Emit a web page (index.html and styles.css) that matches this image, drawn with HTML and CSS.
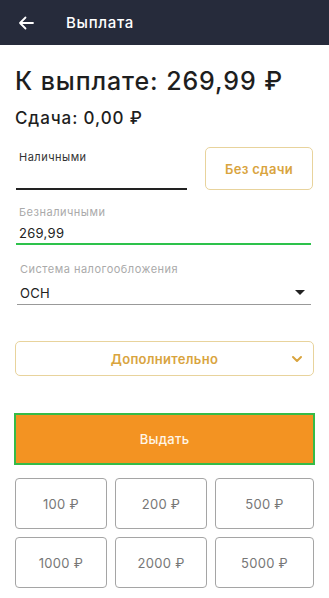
FILE: index.html
```
<!DOCTYPE html>
<html lang="ru">
<head>
<meta charset="utf-8">
<link rel="stylesheet" href="styles.css">
</head>
<body>
<header class="topbar">
  <svg class="back" width="16" height="14" viewBox="0 0 16 14"><path d="M15 7H2M7.5 1.5L2 7l5.5 5.5" fill="none" stroke="#fff" stroke-width="1.8" stroke-linecap="round" stroke-linejoin="round"/></svg>
  <span class="topbar-title">Выплата</span>
</header>
<main class="content">
  <h1 class="total">К выплате: 269,99 ₽</h1>
  <div class="change">Сдача: 0,00 ₽</div>

  <div class="cash-row">
    <div class="field cash">
      <div class="label dark">Наличными</div>
      <div class="value"></div>
    </div>
    <button class="btn-outline nochange">Без сдачи</button>
  </div>

  <div class="field card">
    <div class="label">Безналичными</div>
    <div class="value">269,99</div>
  </div>

  <div class="field tax">
    <div class="label">Система налогообложения</div>
    <div class="value select">ОСН<span class="caret"></span></div>
  </div>

  <button class="btn-outline extra">Дополнительно
    <svg class="chev" width="12" height="8" viewBox="0 0 12 8"><path d="M2 2l4 4 4-4" fill="none" stroke="#d9a43e" stroke-width="2" stroke-linecap="round" stroke-linejoin="round"/></svg>
  </button>

  <button class="btn-primary">Выдать</button>

  <div class="amounts">
    <button class="amount">100 ₽</button>
    <button class="amount">200 ₽</button>
    <button class="amount">500 ₽</button>
    <button class="amount">1000 ₽</button>
    <button class="amount">2000 ₽</button>
    <button class="amount">5000 ₽</button>
  </div>
</main>
</body>
</html>
```
FILE: styles.css
```
* { box-sizing: border-box; }
html, body { margin: 0; padding: 0; background: #fff; }
body { font-family: Inter, "Noto Sans", "DejaVu Sans", sans-serif; color: #222; width: 329px; overflow: hidden; }

.topbar { height: 45px; background: #262b3b; display: flex; align-items: center; padding-left: 18px; }
.back { display: block; }
.topbar-title { color: #fff; font-size: 15px; font-weight: 500; margin-left: 32px; letter-spacing: 0.7px; }

.content { padding: 0 15px; }
.total { margin: 21px 0 0; font-size: 25px; line-height: 30px; font-weight: 500; color: #1e1e1e; letter-spacing: 0.9px; }
.change { margin-top: 11px; font-size: 17px; line-height: 22px; font-weight: 500; color: #1e1e1e; letter-spacing: 0.9px; }

.cash-row { display: flex; justify-content: space-between; align-items: flex-start; margin-top: 18px; }
.field { display: flex; flex-direction: column; }
.label { font-size: 11px; line-height: 14px; color: #aaa; padding-left: 3px; letter-spacing: 0.5px; }
.label.dark { color: #333; }
.value { font-size: 13px; line-height: 18px; color: #222; padding-left: 3px; letter-spacing: 0.3px; }
.cash { width: 172px; padding-top: 3px; padding-left: 1px; }
.cash .value { height: 26px; border-bottom: 2px solid #222; }
.btn-outline { font-family: inherit; background: #fff; border: 1.5px solid #e8d39c; border-radius: 5px; color: #d9a43e; font-weight: 600; font-size: 13px; letter-spacing: 0.3px; cursor: pointer; }
.nochange { width: 108px; height: 43px; margin-right: 1px; }

.card { margin-top: 15px; width: 296px; padding-left: 1px; }
.card .value { margin-top: 5px; padding-bottom: 1px; border-bottom: 2px solid #2dc24b; }

.tax { margin-top: 17px; width: 296px; padding-left: 2px; }
.tax .value { margin-top: 8px; padding-bottom: 2px; border-bottom: 1px solid #999; position: relative; }
.caret { position: absolute; right: 6px; top: 6px; width: 0; height: 0; border-left: 5px solid transparent; border-right: 5px solid transparent; border-top: 5px solid #222; }

.extra { width: 299px; height: 35px; margin-top: 36px; display: flex; align-items: center; justify-content: center; position: relative; }
.chev { position: absolute; right: 10px; top: 13px; }

.btn-primary { display: block; width: 301px; height: 52px; margin: 37px 0 0 -1px; background: #f39322; border: 2px solid #35bb48; color: #fff6e8; font-family: inherit; font-size: 13px; font-weight: 500; letter-spacing: 0.3px; }

.amounts { display: grid; grid-template-columns: 92px 92px 99px; column-gap: 8px; row-gap: 8px; margin-top: 13px; width: 299px; }
.amount { height: 51px; background: #fff; border: 1px solid #a5a5a5; border-radius: 4px; font-family: inherit; font-size: 13px; color: #777; letter-spacing: 0.3px; }
```
